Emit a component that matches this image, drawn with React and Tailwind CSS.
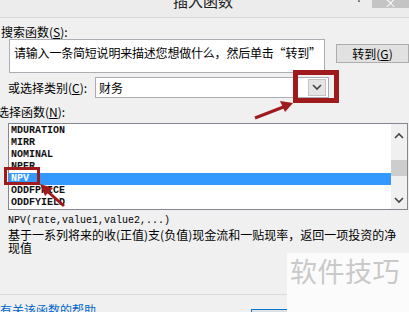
import React from 'react';

const items = ['MDURATION', 'MIRR', 'NOMINAL', 'NPER', 'NPV', 'ODDFPRICE', 'ODDFYIELD'];

function Chevron({ up }) {
  return (
    <svg width="10" height="7" viewBox="0 0 10 7" className="block">
      <path d={up ? 'M1 6 L5 2 L9 6' : 'M1 1 L5 5 L9 1'} fill="none" stroke="#444" strokeWidth="1.6" />
    </svg>
  );
}

export default function App() {
  const cjk = { fontFamily: '"Noto Sans CJK SC", "Noto Sans", sans-serif' };
  return (
    <div className="relative w-[409px] h-[312px] overflow-hidden bg-[#f0f0f0] text-black" style={cjk}>
      {/* title bar */}
      <div className="flex items-start h-[18px] bg-[#ececec] border-b border-[#d8d8d8]">
        <div className="ml-[173px] -mt-[7px] text-[15px] leading-[16px] text-[#222]">插入函数</div>
        <div className="ml-auto mr-[10px] -mt-[9px] text-[12px] leading-[12px] text-[#333]">?</div>
        <div className="w-[37px] h-[8px] bg-[#c4c4c4] flex justify-center">
          <span className="text-white text-[12px] leading-[6px]">×</span>
        </div>
      </div>

      {/* search */}
      <div className="pl-[1px] mt-[8px] text-[12px] leading-[12px]">
        搜索函数(<span className="underline">S</span>):
      </div>
      <div className="flex items-start mt-[1px]">
        <div className="ml-[9px] w-[316px] h-[34px] bg-white border border-[#abadb3] pl-[4px] pt-[6px] text-[12px] leading-[14px] tracking-[-0.2px] whitespace-nowrap">
          请输入一条简短说明来描述您想做什么，然后单击“转到”
        </div>
        <div className="ml-[11px] mt-[5px] w-[73px] h-[19px] bg-[#e1e1e1] border border-[#adadad] flex items-center justify-center text-[12px] leading-[12px]">
          转到(<span className="underline">G</span>)
        </div>
      </div>

      {/* category */}
      <div className="flex items-center mt-[4px] h-[21px]">
        <div className="ml-[8px] w-[87px] text-[12px] leading-[12px]">
          或选择类别(<span className="underline">C</span>):
        </div>
        <div className="w-[234px] h-[21px] bg-white border border-[#abadb3] flex items-center pl-[3px] pr-[2px] text-[12px]">
          <span>财务</span>
          <div className="ml-auto w-[18px] h-[17px] bg-[#e5e5e5] border border-[#c4c4c4] flex items-center justify-center">
            <Chevron />
          </div>
        </div>
      </div>

      {/* function list */}
      <div className="-ml-[3px] mt-[8px] text-[12px] leading-[12px]">
        选择函数(<span className="underline">N</span>):
      </div>
      <div
        className="ml-[8px] mt-[5px] w-[400px] h-[87px] bg-white border border-[#828790] flex"
        style={{ fontFamily: '"Liberation Mono", monospace' }}
      >
        <div className="flex-1 pt-[1px]">
          {items.map((it) => (
            <div
              key={it}
              className={
                'h-[12px] pl-[2px] text-[10px] leading-[12px] font-bold ' +
                (it === 'NPV' ? 'bg-[#3399ff] text-white' : 'text-[#111]')
              }
            >
              {it}
            </div>
          ))}
        </div>
        <div className="w-[16px] bg-[#f0f0f0] flex flex-col items-center">
          <div className="h-[22px] flex items-center"><Chevron up /></div>
          <div className="mt-[14px] w-[16px] h-[16px] bg-[#cdcdcd]" />
          <div className="mt-auto h-[18px] flex items-center"><Chevron /></div>
        </div>
      </div>

      <div className="ml-[8px] mt-[5px] text-[10px] leading-[12px]" style={{ fontFamily: '"Liberation Mono", monospace' }}>
        NPV(rate,value1,value2,...)
      </div>
      <div className="ml-[8px] mt-[1px] w-[396px] text-[12px] leading-[13px]">
        基于一系列将来的收(正值)支(负值)现金流和一贴现率，返回一项投资的净现值
      </div>

      <div className="mt-[40px] w-[287px] border-t border-[#dadada]" />
      <div className="flex items-start mt-[9px]">
        <div className="text-[12px] leading-[12px] text-[#0066cc]">有关该函数的帮助</div>
        <div className="ml-auto mr-[83px] mt-[5px] w-[75px] h-[20px] bg-[#e1e1e1] border border-[#0078d7]" />
      </div>

      {/* watermark */}
      <div className="absolute left-[287px] top-[253px] w-[122px] h-[59px] bg-[#fbfbfb] pl-[3px] pt-[1px] text-[27px] leading-[34px] text-[#c9c9c9] tracking-[0.5px]">
        软件技巧
      </div>

      {/* annotations */}
      <svg className="absolute left-0 top-0 pointer-events-none" width="409" height="312">
        <rect x="295.5" y="72.5" width="41" height="28" fill="none" stroke="#9e1a1d" strokeWidth="5" />
        <rect x="5.5" y="168.5" width="33" height="15" fill="none" stroke="#9e1a1d" strokeWidth="3" />
        <line x1="255" y1="118" x2="286" y2="106" stroke="#9e1a1d" strokeWidth="3" />
        <polygon points="293,103 280,101 285,112" fill="#9e1a1d" />
        <line x1="64" y1="206" x2="46" y2="190" stroke="#9e1a1d" strokeWidth="3" />
        <polygon points="40,184 53,188 45,196" fill="#9e1a1d" />
      </svg>
    </div>
  );
}
